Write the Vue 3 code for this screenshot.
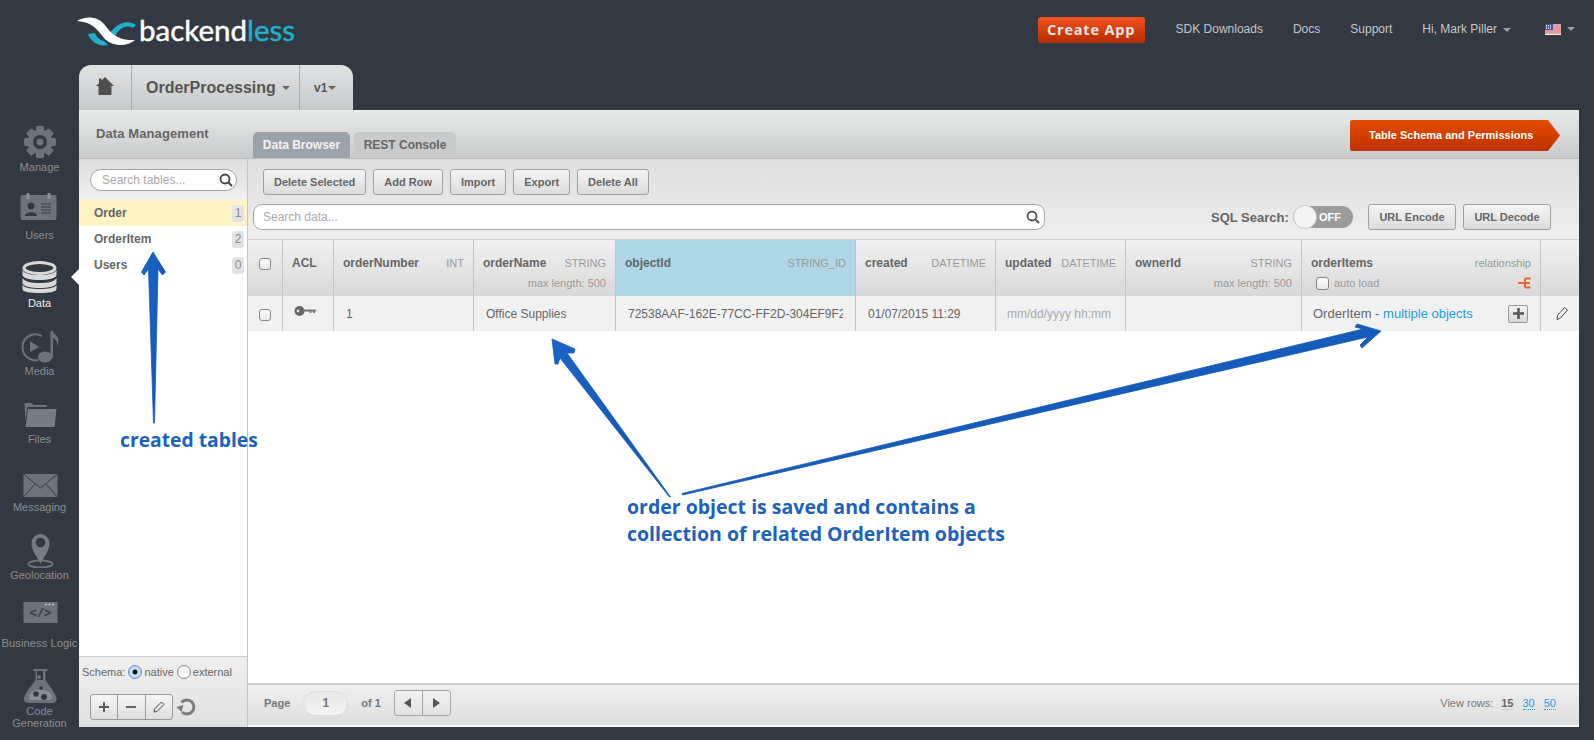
<script setup>
const columns = [
  { name: 'orderNumber', type: 'INT' },
  { name: 'orderName', type: 'STRING', sub: 'max length: 500' },
  { name: 'objectId', type: 'STRING_ID', active: true },
  { name: 'created', type: 'DATETIME' },
  { name: 'updated', type: 'DATETIME' },
  { name: 'ownerId', type: 'STRING', sub: 'max length: 500' }
]
const tables = [
  { name: 'Order', count: 1, selected: true },
  { name: 'OrderItem', count: 2 },
  { name: 'Users', count: 0 }
]
const actions = ['Delete Selected', 'Add Row', 'Import', 'Export', 'Delete All']
</script>

<template>
  <div class="page">
    <header class="top">
      <div class="logo">
        <svg width="62" height="34" viewBox="75 14 62 34">
          <path fill="#1fb0cc" d="M88 33 L95 32 C97 37 100 39 104 40 L108 44 C99 46 91 41 88 33Z" />
          <path fill="#1fb0cc" d="M108 36 C113 25 125 17 136 24 L133 27 C125 23 118 28 114 38Z" />
          <path fill="#fff" d="M77 20 C85 15 97 15 104 23 C110 31 117 40 135 39 C127 46 112 46 104 37 C97 28 92 21 77 20Z" />
        </svg>
        <span class="wordmark">backend<em>less</em></span>
      </div>
      <nav class="topnav">
        <a class="create">Create App</a>
        <a class="link">SDK Downloads</a>
        <a class="link">Docs</a>
        <a class="link">Support</a>
        <a class="link">Hi, Mark Piller<i class="caret dim"></i></a>
        <span class="flagwrap">
          <svg width="16" height="11" viewBox="0 0 16 11">
            <rect width="16" height="11" fill="#f2f2f2" />
            <path d="M0 1h16M0 3h16M0 5h16M0 7h16M0 9h16" stroke="#d9444a" stroke-width="1" />
            <rect width="8" height="6" fill="#3b58a8" />
            <path d="M1 1.5h6M1 3h6M1 4.5h6" stroke="#dfe4f2" stroke-dasharray="1 1" />
          </svg>
          <i class="caret dim"></i>
        </span>
      </nav>
    </header>

    <aside class="rail">
      <div class="rail-item">
        <svg viewBox="0 0 60 48" width="60" height="48">
          <g fill="#6e727c">
            <circle cx="30" cy="30" r="12.5" />
            <rect x="26" y="14" width="8" height="32" rx="1.5" />
            <rect x="26" y="14" width="8" height="32" rx="1.5" transform="rotate(45 30 30)" />
            <rect x="26" y="14" width="8" height="32" rx="1.5" transform="rotate(90 30 30)" />
            <rect x="26" y="14" width="8" height="32" rx="1.5" transform="rotate(135 30 30)" />
          </g>
          <circle cx="30" cy="30" r="7" fill="#333943" />
          <circle cx="30" cy="30" r="3.4" fill="#6e727c" />
        </svg>
        <span>Manage</span>
      </div>
      <div class="rail-item">
        <svg viewBox="0 0 60 48" width="60" height="48">
          <rect x="10.5" y="15" width="36" height="25" rx="2" fill="#6e727c" />
          <rect x="16.500" y="13" width="3" height="6" fill="#8a8e96" />
          <rect x="37.500" y="13" width="3" height="6" fill="#8a8e96" />
          <circle cx="21" cy="26" r="3.400" fill="#333943" />
          <path d="M15 36 C15 31 27 31 27 36Z" fill="#333943" />
          <path d="M31 24h10M31 27h10M31 30h10M31 33h10" stroke="#333943" stroke-width="1" />
        </svg>
        <span>Users</span>
      </div>
      <div class="rail-item active">
        <svg viewBox="0 0 60 48" width="60" height="48">
          <path fill="#d9d9d9" d="M12.500 22v5c0 3 8 5 17 5s17-2 17-5v-5c-2 4-9 5-17 5s-15-1-17-5z" />
          <path fill="#d9d9d9" d="M12.500 30v5c0 3 8 5 17 5s17-2 17-5v-5c-2 4-9 5-17 5s-15-1-17-5z" />
          <path fill="#d9d9d9" d="M12.500 37v4c0 3 8 4 17 4s17-1 17-4v-4c-2 3-9 4-17 4s-15-1-17-4z" />
          <ellipse cx="29.500" cy="20" rx="15.500" ry="5.500" fill="#333943" stroke="#d9d9d9" stroke-width="3" />
        </svg>
        <span>Data</span>
      </div>
      <div class="rail-item">
        <svg viewBox="0 0 60 48" width="60" height="48">
          <path d="M32 20 A13 13 0 1 0 28 44" fill="none" stroke="#6e727c" stroke-width="2" />
          <path d="M20 25 L29 31 L20 36Z" fill="#6e727c" />
          <rect x="40.500" y="15" width="2.500" height="27" fill="#6e727c" />
          <ellipse cx="35" cy="41" rx="7" ry="5.500" fill="#6e727c" />
          <path d="M42 14 C44 20 52 20 47 30 C48 23 44 23 42 21Z" fill="#6e727c" />
        </svg>
        <span>Media</span>
      </div>
      <div class="rail-item">
        <svg viewBox="0 0 60 48" width="60" height="48">
          <path d="M14.500 19 h7 l2 2 h13 v2 h-19 l-2 14 z" fill="#6e727c" />
          <path d="M18 25 H46.500 L44.500 43 H15.500Z" fill="#777b85" />
        </svg>
        <span>Files</span>
      </div>
      <div class="rail-item">
        <svg viewBox="0 0 60 48" width="60" height="48">
          <rect x="13.500" y="22" width="34" height="23" fill="#6e727c" />
          <path d="M13.500 22 L30.500 36 L47.500 22M13.500 45 L25 32M47.500 45 L36 32" fill="none" stroke="#333943" stroke-width="1" />
        </svg>
        <span>Messaging</span>
      </div>
      <div class="rail-item">
        <svg viewBox="0 0 60 48" width="60" height="48">
          <ellipse cx="30.500" cy="44" rx="12" ry="3.500" fill="none" stroke="#6e727c" stroke-width="2" />
          <path d="M30.500 44 C28 37 21.500 32 21.500 23 A9 9 0 0 1 39.500 23 C39.500 32 33 37 30.500 44Z" fill="#777b85" />
          <circle cx="30.500" cy="22.500" r="4.800" fill="#333943" />
        </svg>
        <span>Geolocation</span>
      </div>
      <div class="rail-item wide">
        <svg viewBox="0 0 60 48" width="60" height="48">
          <rect x="13.500" y="14" width="34" height="21" fill="#6e727c" />
          <path d="M35 16.500h2M38.500 16.500h2M42 16.500h2" stroke="#c9ccd2" stroke-width="1.500" />
          <text x="30.500" y="29" text-anchor="middle" class="code">&lt;/&gt;</text>
        </svg>
        <span>Business Logic</span>
      </div>
      <div class="rail-item">
        <svg viewBox="0 0 60 48" width="60" height="48">
          <path fill-rule="evenodd" fill="#6e727c" d="M23.500 13 H37.500 V15 H35.500 V24 C40 31 46 38 46.500 42 C47 46 44 47 42 47 H19 C16 47 13.500 46 14 42 C15 37 21 31 25.500 24 V15 H23.500Z" />
          <rect x="27" y="15" width="6" height="9" fill="#333943" />
          <circle cx="29" cy="21" r="2" fill="#6e727c" />
          <path d="M20 38 C25 32 36 33 41 38 C43 41 42 44 40 44 H21 C19 44 18 41 20 38Z" fill="#8a8e96" />
          <circle cx="26" cy="38" r="2.800" fill="#333943" />
          <circle cx="34" cy="41" r="3" fill="#333943" />
          <circle cx="31" cy="32" r="1.800" fill="#333943" />
        </svg>
        <span>Code<br />Generation</span>
      </div>
    </aside>

    <main class="work">
      <div class="apptabs">
        <div class="home">
          <svg width="18" height="18" viewBox="0 0 18 18">
            <path d="M9 0 L18 9 H15.500 V18 H2.500 V9 H0 L3 6 V1.500 H5.500 V3.500Z" fill="#4e4e4e" />
          </svg>
        </div>
        <div class="appname">OrderProcessing<i class="caret"></i></div>
        <div class="ver">v1<i class="caret"></i></div>
      </div>

      <section class="panel">
        <div class="panel-head">
          <div class="panel-title">Data Management</div>
          <div class="tabs">
            <div class="tab on">Data Browser</div>
            <div class="tab">REST Console</div>
          </div>
          <div class="schema-btn">Table Schema and Permissions</div>
        </div>

        <div class="panel-body">
          <div class="left">
            <div class="left-search">
              <div class="pill">
                <span>Search tables...</span>
                <svg width="14" height="14" viewBox="0 0 14 14"><circle cx="6" cy="6" r="4.500" fill="none" stroke="#444" stroke-width="1.800" /><path d="M9.500 9.500L13 13" stroke="#444" stroke-width="2" /></svg>
              </div>
            </div>
            <ul class="tablelist">
              <li v-for="t in tables" :key="t.name" :class="{ sel: t.selected }">
                <span>{{ t.name }}</span><b>{{ t.count }}</b>
              </li>
            </ul>
            <div class="left-foot">
              <div class="schema">
                <span class="s-l">Schema:</span>
                <i class="radio on"></i><span>native</span>
                <i class="radio"></i><span>external</span>
              </div>
              <div class="tools">
                <div class="toolgroup">
                  <span class="tool"><svg width="12" height="12" viewBox="0 0 12 12"><path d="M6 1v10M1 6h10" stroke="#555" stroke-width="1.800" /></svg></span>
                  <span class="tool"><svg width="12" height="12" viewBox="0 0 12 12"><path d="M1 6h10" stroke="#555" stroke-width="1.800" /></svg></span>
                  <span class="tool"><svg width="14" height="14" viewBox="0 0 14 14"><path d="M2 12 L2.500 9 L9.500 2 L12 4.500 L5 11.500Z" fill="none" stroke="#444" stroke-width="1" /></svg></span>
                </div>
                <svg class="refresh" width="21" height="20" viewBox="0 0 20 20"><path d="M5 5.500 A7 7 0 1 1 5.500 15" fill="none" stroke="#7b7b7b" stroke-width="3" /><path d="M0 10 L7 8 L5 15Z" fill="#7b7b7b" /></svg>
              </div>
            </div>
          </div>

          <div class="right">
            <div class="toolbar">
              <div class="actions">
                <button v-for="a in actions" :key="a" class="btn">{{ a }}</button>
              </div>
              <div class="searchrow">
                <div class="datasearch">
                  <span>Search data...</span>
                  <svg width="14" height="14" viewBox="0 0 14 14"><circle cx="6" cy="6" r="4.500" fill="none" stroke="#555" stroke-width="1.800" /><path d="M9.500 9.500L13 13" stroke="#555" stroke-width="2" /></svg>
                </div>
                <div class="sql">SQL Search:</div>
                <div class="toggle"><i></i><span>OFF</span></div>
                <button class="btn url first">URL Encode</button>
                <button class="btn url">URL Decode</button>
              </div>
            </div>

            <div class="grid head">
              <div class="cell chk"><i class="box"></i></div>
              <div class="cell acl">ACL</div>
              <div v-for="c in columns" :key="c.name" class="cell hcell" :class="{ active: c.active }">
                <div class="hline"><b>{{ c.name }}</b><span>{{ c.type }}</span></div>
                <div v-if="c.sub" class="hsub">{{ c.sub }}</div>
              </div>
              <div class="cell hcell">
                <div class="hline"><b>orderItems</b><span>relationship</span></div>
                <div class="hsub rel">
                  <label><i class="box small"></i>auto load</label>
                  <svg width="13" height="12" viewBox="0 0 13 12"><path d="M0 6h7M7 1.500h5.500M7 1.500v9M7 10.500h5.500M7 6h5" fill="none" stroke="#f0622d" stroke-width="2" /></svg>
                </div>
              </div>
              <div class="cell last"></div>
            </div>

            <div class="grid row">
              <div class="cell chk"><i class="box"></i></div>
              <div class="cell keycell">
                <svg width="22" height="12" viewBox="0 0 22 12"><circle cx="5.500" cy="6" r="5" fill="#666" /><circle cx="4" cy="6" r="1.400" fill="#ddd" /><path d="M9 4.500H22V6.500H21V8H19V6.500H17.500V8H15.500V6.500H9Z" fill="#777" /></svg>
              </div>
              <div class="cell val num">1</div>
              <div class="cell val">Office Supplies</div>
              <div class="cell val"><span class="clip">72538AAF-162E-77CC-FF2D-304EF9F2</span></div>
              <div class="cell val">01/07/2015 11:29</div>
              <div class="cell val ph">mm/dd/yyyy hh:mm</div>
              <div class="cell val"></div>
              <div class="cell val rel-val">
                <span>OrderItem - <a>multiple objects</a></span>
                <span class="plus"><svg width="11" height="11" viewBox="0 0 11 11"><path d="M5.500 0v11M0 5.500h11" stroke="#555" stroke-width="2.500" /></svg></span>
              </div>
              <div class="cell last pen">
                <svg width="14" height="15" viewBox="0 0 14 15"><path d="M2 13.500 L2.500 9.500 L9.500 1.500 L12.500 4 L5.500 12Z" fill="#fff" stroke="#444" stroke-width="1" /></svg>
              </div>
            </div>

            <div class="spacer"></div>

            <div class="pager">
              <span class="p-l">Page</span>
              <span class="p-in">1</span>
              <span class="p-of">of 1</span>
              <span class="p-nav">
                <i><svg width="8" height="10" viewBox="0 0 8 10"><path d="M7 0V10L0 5Z" fill="#555" /></svg></i>
                <i><svg width="8" height="10" viewBox="0 0 8 10"><path d="M1 0V10L8 5Z" fill="#555" /></svg></i>
              </span>
              <span class="views">View rows:<b>15</b><a>30</a><a>50</a></span>
            </div>
          </div>
        </div>
      </section>
    </main>

    <svg class="arrows" width="1594" height="740" viewBox="0 0 1594 740">
      <defs>
        <linearGradient id="blue" x1="0" y1="0" x2="1" y2="1">
          <stop offset="0" stop-color="#1b64c6" />
          <stop offset="1" stop-color="#1055b0" />
        </linearGradient>
      </defs>
      <g fill="url(#blue)" stroke="#1459b6" stroke-width="0.800" stroke-linejoin="round">
        <polygon points="153,252 165.500,272 162.500,275 158,269 154.500,423 153.500,423 148.500,269 144,275 141.500,272" />
        <polygon points="552,339 575,349 574,353 567,353 670.500,497 669.500,497 560,358 558,364 555,364" />
        <polygon points="1381,331 1357,324 1355,327 1363,329 682,493.500 682.500,495 1368,337 1360,345 1362,348" />
      </g>
    </svg>
    <div class="note n1">created tables</div>
    <div class="note n2">order object is saved and contains a<br />collection of related OrderItem objects</div>
  </div>
</template>

<style>
html, body { margin: 0; background: #333943; }
</style>

<style scoped>
.page {
  position: relative;
  width: 1594px;
  height: 740px;
  overflow: hidden;
  background: #333943;
  display: grid;
  grid-template-columns: 79px 1fr;
  grid-template-rows: 65px 1fr;
  font-family: "Liberation Sans", Arial, sans-serif;
  font-size: 12px;
  color: #666;
}
.caret {
  display: inline-block;
  width: 0;
  height: 0;
  border-left: 4px solid transparent;
  border-right: 4px solid transparent;
  border-top: 4px solid #666;
  vertical-align: middle;
  margin-left: 6px;
}
.caret.dim { border-top-color: #9a9da3; }

.top {
  grid-column: 1 / 3;
  display: flex;
  align-items: flex-start;
  justify-content: space-between;
  padding: 0 19px 0 75px;
}
.logo { display: flex; align-items: flex-start; padding-top: 15px; }
.wordmark {
  font-family: Lato, sans-serif;
  font-size: 29.5px;
  line-height: 30px;
  letter-spacing: 0;
  -webkit-text-stroke: 0.45px currentColor;
  color: #fff;
  margin-left: 2px;
}
.wordmark em { font-style: normal; color: #1fb0cc; }
.topnav { display: flex; align-items: center; height: 58px; color: #c3c6ca; }
.create {
  width: 107px;
  height: 26px;
  line-height: 26px;
  text-align: center;
  font-family: "Open Sans", sans-serif;
  font-weight: 700;
  font-size: 14.5px;
  letter-spacing: 0.8px;
  color: #e4e4e4;
  border-radius: 3px;
  background: linear-gradient(#f4511f, #b52d00);
  margin-right: 30px;
  margin-top: 2px;
  transform: translateX(-1px);
}
.link { margin-right: 30px; color: #c3c6ca; font-size: 12px; }
.link:nth-child(5) { margin-right: 34px; }
.flagwrap { display: flex; align-items: center; }

.rail { padding-top: 47px; position: relative; }
.rail-item {
  position: relative;
  height: 68px;
  display: flex;
  flex-direction: column;
  align-items: center;
  font-size: 11px;
  line-height: 14px;
  color: #8a8d93;
  text-align: center;
}
.rail-item svg { display: block; flex: none; }
.rail-item span { display: block; white-space: nowrap; line-height: 12px; padding-top: 1px; }
.rail-item.wide span { font-size: 11.3px; }
.rail-item.active { color: #f0f0f0; }
.rail-item.active::after {
  content: "";
  position: absolute;
  right: 0;
  top: 21px;
  border-top: 8px solid transparent;
  border-bottom: 8px solid transparent;
  border-right: 8px solid #fff;
}
.code { font: 700 12px "Liberation Mono", monospace; fill: #333943; }

.work { display: flex; flex-direction: column; padding: 0 15px 13px 0; min-width: 0; }
.apptabs {
  width: 274px;
  height: 45px;
  flex: none;
  display: flex;
  border-radius: 12px 12px 0 0;
  background: linear-gradient(#e0e1e2, #c9cacb);
  align-items: stretch;
}
.home { width: 53px; display: flex; align-items: center; justify-content: center; border-right: 1px solid #aaa; padding-bottom: 3px; box-sizing: border-box; }
.appname {
  width: 168px;
  box-sizing: border-box;
  border-right: 1px solid #aaa;
  display: flex;
  align-items: center;
  padding-left: 14px;
  font-weight: 700;
  font-size: 16px;
  color: #555;
}
.ver { flex: 1; display: flex; align-items: center; padding-left: 14px; font-weight: 700; font-size: 12px; color: #555; }
.ver .caret { margin-left: 1px; }

.panel { flex: 1; display: flex; flex-direction: column; min-height: 0; background: #fff; }
.panel-head {
  height: 48px;
  flex: none;
  display: flex;
  border-bottom: 1px solid #bcbdbe;
  background: linear-gradient(#e9eaea, #c9cacb);
  position: relative;
}
.panel-title {
  width: 174px;
  box-sizing: border-box;
  padding: 16px 0 0 17px;
  font-weight: 700;
  font-size: 13px;
  letter-spacing: 0.1px;
  color: #666;
}
.tabs { display: flex; align-items: flex-end; gap: 4px; }
.tab {
  height: 26px;
  line-height: 27px;
  width: 102px;
  text-align: center;
  font-weight: 700;
  font-size: 12px;
  border-radius: 5px 5px 0 0;
  background: #c9cacb;
  color: #666;
}
.tab.on { width: 97px; background: #9ca2aa; color: #f4f4f4; }
.schema-btn {
  margin: 10px 19px 0 auto;
  width: 210px;
  height: 31px;
  box-sizing: border-box;
  padding-left: 19px;
  line-height: 30px;
  font-weight: 700;
  font-size: 11px;
  color: #fff;
  background: linear-gradient(#e34e00, #c02f00);
  clip-path: polygon(0 0, 198px 0, 100% 50%, 198px 100%, 0 100%);
  border-radius: 2px 0 0 2px;
}

.panel-body { flex: 1; min-height: 0; display: grid; grid-template-columns: 169px 1fr; }
.left { display: flex; flex-direction: column; border-right: 1px solid #c4c4c4; min-height: 0; }
.left-search { height: 41px; flex: none; box-sizing: border-box; padding: 10px 10px 0 11px; background: linear-gradient(#dddddd, #f0f0f0); }
.pill {
  height: 22px;
  box-sizing: border-box;
  border: 1px solid #a5a5a5;
  border-radius: 11px;
  background: #fff;
  display: flex;
  align-items: center;
  justify-content: space-between;
  padding: 0 3px 0 11px;
  color: #aaa;
  font-size: 12px;
}
.tablelist { list-style: none; margin: 0; padding: 0; flex: 1; background: #fff; }
.tablelist li {
  height: 26px;
  display: flex;
  align-items: center;
  justify-content: space-between;
  padding: 0 3px 0 15px;
  font-weight: 700;
  font-size: 12px;
  color: #666;
  box-sizing: border-box;
}
.tablelist li.sel { background: #fdf3c5; }
.tablelist b {
  width: 12px;
  height: 17px;
  line-height: 17px;
  text-align: center;
  font-weight: 400;
  color: #888;
  background: #e4e4e4;
  border-radius: 3px;
}
.left-foot {
  height: 71px;
  flex: none;
  box-sizing: border-box;
  border-top: 1px solid #ccc;
  background: linear-gradient(#f0f0f0, #e0e0e0);
  padding: 7px 0 0 3px;
  font-size: 11px;
  color: #666;
}
.schema { display: flex; align-items: center; height: 15px; white-space: nowrap; }
.s-l { margin-right: 0; }
.radio {
  width: 12px;
  height: 12px;
  border-radius: 50%;
  border: 1px solid #888;
  background: linear-gradient(#f5f5f5, #fff);
  margin-right: 2px;
  flex: none;
  box-sizing: content-box;
  position: relative;
}
.schema span + .radio { margin-left: 3px; }
.radio.on { border-color: #5b8fc9; background: radial-gradient(circle, #111 0 2px, #cfe3f8 3px, #a9cdf2 100%); }
.tools { display: flex; align-items: center; margin: 15px 0 0 8px; }
.toolgroup { display: flex; width: 83px; height: 26px; box-sizing: border-box; border: 1px solid #999; border-radius: 3px; background: linear-gradient(#f6f6f6, #dedede); }
.tool { flex: 1; display: flex; align-items: center; justify-content: center; border-right: 1px solid #999; }
.tool:last-child { border-right: 0; }
.refresh { margin-left: 3px; }

.right { display: flex; flex-direction: column; min-width: 0; min-height: 0; }
.toolbar {
  height: 81px;
  flex: none;
  box-sizing: border-box;
  border-bottom: 1px solid #cfcfcf;
  background: linear-gradient(#dedede, #efefef);
  padding: 10px 0 0 5px;
}
.actions { display: flex; gap: 7px; margin-left: 10px; height: 26px; }
.btn {
  height: 26px;
  padding: 0 10px;
  box-sizing: border-box;
  border: 1px solid #a0a0a0;
  border-radius: 3px;
  background: linear-gradient(#f4f4f4, #dcdcdc);
  font: 700 11px "Liberation Sans", Arial, sans-serif;
  color: #666;
  white-space: nowrap;
}
.searchrow { display: flex; align-items: center; margin-top: 9px; height: 26px; }
.datasearch {
  width: 792px;
  height: 26px;
  box-sizing: border-box;
  border: 1px solid #a5a5a5;
  border-radius: 9px;
  background: #fff;
  display: flex;
  align-items: center;
  justify-content: space-between;
  padding: 0 4px 0 9px;
  color: #aaa;
  font-size: 12px;
}
.sql { margin-left: 166px; font-weight: 700; font-size: 13px; color: #666; width: 82px; white-space: nowrap; }
.toggle {
  position: relative;
  width: 60px;
  height: 22px;
  border-radius: 11px;
  background: #9b9b9b;
  color: #fff;
  font-weight: 700;
  font-size: 11px;
  line-height: 22px;
}
.toggle i {
  position: absolute;
  left: 0;
  top: -1px;
  width: 24px;
  height: 24px;
  border-radius: 50%;
  background: #f4f4f4;
  border: 1px solid #ccc;
  box-sizing: border-box;
}
.toggle span { margin-left: 26px; }
.url { width: 88px; padding: 0; margin-left: 7px; }
.url.first { margin-left: 15px; }

.grid {
  display: grid;
  grid-template-columns: 35px 51px 140px 142px 240px 140px 130px 176px 239px 1fr;
  flex: none;
}
.cell { border-right: 1px solid #c4c4c4; box-sizing: border-box; min-width: 0; }
.cell.last { border-right: 0; }
.head { height: 56px; background: linear-gradient(#f1f1f1, #d9d9d9); }
.row { height: 35px; background: #f1f1f1; }
.chk { display: flex; justify-content: center; padding: 18px 0 0 0; }
.row .chk { padding-top: 13px; }
.box {
  display: inline-block;
  width: 10px;
  height: 10px;
  border: 1px solid #888;
  border-radius: 3px;
  background: linear-gradient(#fff, #e8e8e8);
  box-sizing: content-box;
  flex: none;
}
.acl { padding: 16px 0 0 9px; font-weight: 700; color: #666; line-height: 14px; }
.hcell { padding: 16px 9px 0 9px; }
.hcell.active { background: #aed6e5; }
.hline { display: flex; justify-content: space-between; align-items: baseline; line-height: 14px; white-space: nowrap; }
.hline b { font-size: 12px; color: #666; }
.hline span { font-size: 11px; color: #999; }
.hsub { margin-top: 6px; text-align: right; font-size: 11px; color: #999; line-height: 14px; white-space: nowrap; }
.hsub.rel { display: flex; justify-content: space-between; align-items: center; }
.hsub.rel label { display: flex; align-items: center; gap: 5px; margin-left: 5px; }
.box.small { width: 11px; height: 11px; }
.keycell { padding: 9px 0 0 11px; }
.keycell svg { display: block; }
.val { display: flex; align-items: center; padding: 0 12px; color: #666; font-size: 12px; white-space: nowrap; overflow: hidden; }
.clip { overflow: hidden; display: block; width: 100%; }
.ph { color: #aaa; padding-left: 11px; }
.rel-val { justify-content: space-between; font-size: 13px; padding-left: 11px; }
.rel-val a { color: #189fe4; }
.plus {
  width: 20px;
  height: 18px;
  box-sizing: border-box;
  border: 1px solid #999;
  border-radius: 2px;
  background: linear-gradient(#f2f2f2, #d8d8d8);
  display: flex;
  align-items: center;
  justify-content: center;
}
.pen { display: flex; align-items: center; padding-left: 14px; }
.spacer { flex: 1; background: #fff; }
.pager {
  height: 44px;
  flex: none;
  box-sizing: border-box;
  border-top: 2px solid #cfcfcf;
  border-bottom: 2px solid #f8f8f8;
  background: linear-gradient(#efefef, #dedede);
  display: flex;
  align-items: center;
  padding: 0 0 4px 16px;
  font-size: 11px;
  font-weight: 700;
  color: #777;
}
.p-in {
  margin-left: 13px;
  width: 45px;
  height: 25px;
  line-height: 23px;
  text-align: center;
  border-radius: 13px;
  border: 1px solid #ddd;
  box-sizing: border-box;
  background: linear-gradient(#e6e6e6, #f6f6f6);
  font-size: 12px;
}
.p-of { margin-left: 13px; }
.p-nav {
  margin-left: 13px;
  width: 57px;
  height: 26px;
  box-sizing: border-box;
  border: 1px solid #a5a5a5;
  border-radius: 3px;
  display: flex;
  background: linear-gradient(#f2f2f2, #e2e2e2);
}
.p-nav i { flex: 1; display: flex; align-items: center; justify-content: center; border-right: 1px solid #a5a5a5; }
.p-nav i:last-child { border-right: 0; }
.views { margin-left: auto; margin-right: 23px; font-weight: 400; color: #777; display: flex; align-items: center; }
.views b { margin-left: 8px; color: #666; border-bottom: 1px solid #d0d0d0; }
.views a { margin-left: 9px; color: #189fe4; border-bottom: 1px dotted #189fe4; }

.arrows { position: absolute; left: 0; top: 0; pointer-events: none; }
.note {
  position: absolute;
  font-family: "Open Sans", sans-serif;
  font-weight: 700;
  font-size: 19.500px;
  line-height: 26.500px;
  color: #1c62bd;
  white-space: nowrap;
}
.n1 { left: 120px; top: 427px; font-size: 19.300px; }
.n2 { left: 627px; top: 494px; }
</style>
